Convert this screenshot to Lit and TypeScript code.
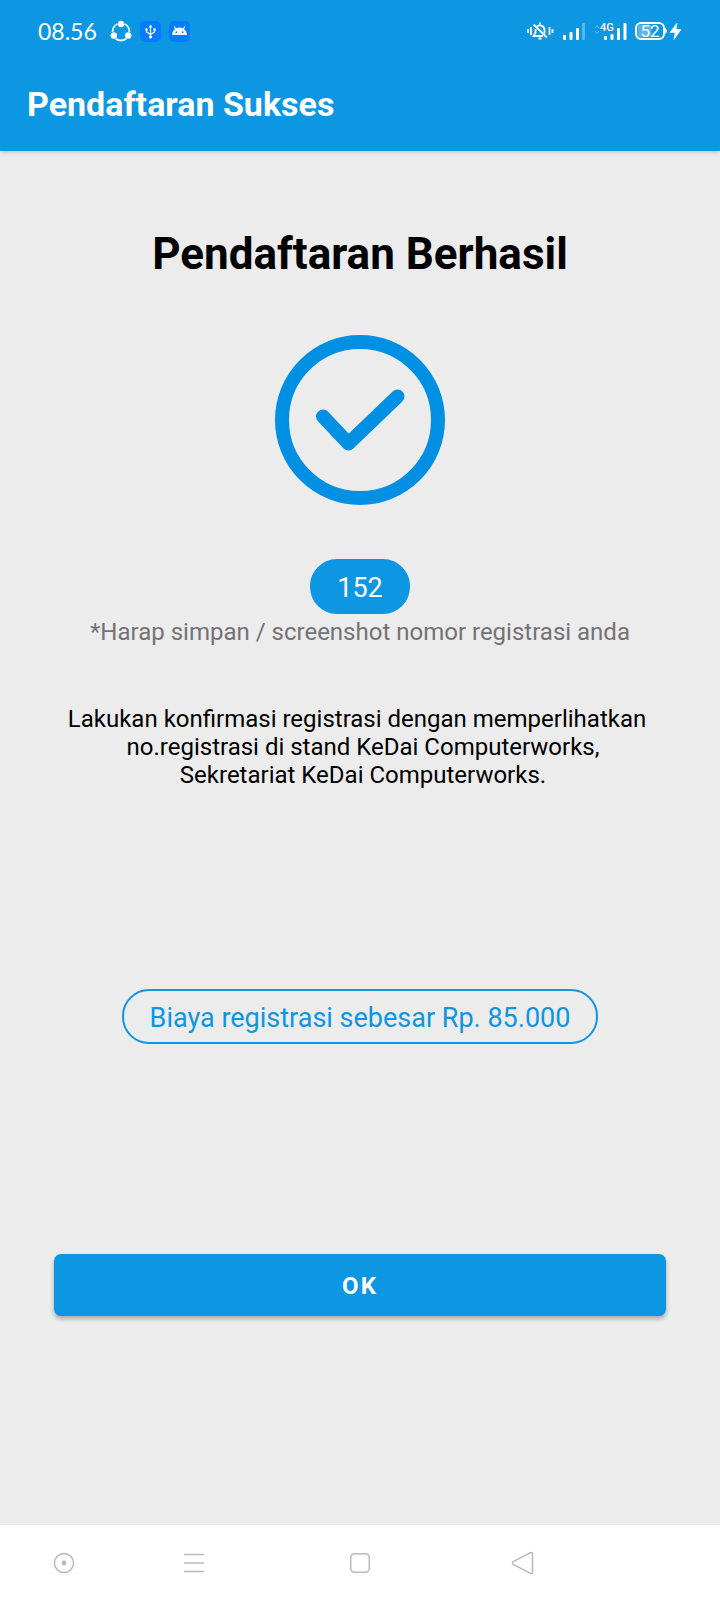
import { LitElement, html, css } from "lit";
import { customElement, property } from "lit/decorators.js";

@customElement("status-bar")
class StatusBar extends LitElement {
  @property() time = "08.56";
  @property() battery = "52";

  static styles = css`
    :host {
      display: flex;
      align-items: center;
      justify-content: space-between;
      height: 62px;
      padding: 0 38px;
      color: #fff;
      font-family: Lato, Roboto, sans-serif;
    }
    .group {
      display: flex;
      align-items: center;
    }
    .time {
      font-size: 23px;
      line-height: 28px;
      margin-right: 13px;
    }
    .apps {
      gap: 8px;
    }
    .system {
      gap: 8px;
    }
    svg {
      display: block;
    }
    .net {
      font: 500 11px Roboto, sans-serif;
    }
    .level {
      font: 400 17px Roboto, sans-serif;
    }
  `;

  render() {
    return html`
      <div class="group">
        <span class="time">${this.time}</span>
        <div class="group apps">
          <svg width="22" height="22" viewBox="0 0 22 22" fill="none" stroke="#e4f8ff" stroke-width="1.800">
            <path d="M7.500 4A8.500 8.500 0 0 0 2.600 12" />
            <path d="M14.500 4A8.500 8.500 0 0 1 19.400 12" />
            <path d="M5.500 18.500A8.500 8.500 0 0 0 16.500 18.500" />
            <g fill="#fff" stroke="none">
              <circle cx="11" cy="4" r="3.200" />
              <circle cx="3.800" cy="15.500" r="3.200" />
              <circle cx="18.200" cy="15.500" r="3.200" />
            </g>
          </svg>
          <svg width="21" height="21" viewBox="0 0 21 21">
            <rect width="21" height="21" rx="5" fill="#047cff" />
            <g fill="none" stroke="#fff" stroke-width="1.300">
              <path d="M10.500 5v11M6.500 8.500v2.500l4 2.500M14.500 8.500v2.500l-4 2.500" />
            </g>
            <path d="M8.500 6.500l2-3 2 3z" fill="#fff" />
            <circle cx="10.500" cy="16" r="1.600" fill="#fff" />
            <circle cx="6.500" cy="8.500" r="1.200" fill="#fff" />
            <path d="M13.400 7.300h2.200v2.200h-2.200z" fill="#fff" />
          </svg>
          <svg width="21" height="21" viewBox="0 0 21 21">
            <rect width="21" height="21" rx="5" fill="#047cff" />
            <path d="M3 14a7.500 7.500 0 0 1 15 0z" fill="#fff" />
            <path d="M7 8.500L5.200 5.500M14 8.500l1.800-3" stroke="#fff" stroke-width="1.200" />
            <circle cx="7.300" cy="11.200" r="0.900" fill="#047cff" />
            <circle cx="13.700" cy="11.200" r="0.900" fill="#047cff" />
          </svg>
        </div>
      </div>
      <div class="group system">
        <svg width="28" height="20" viewBox="0 0 28 20" fill="none" stroke="#fff" stroke-width="1.800">
          <path d="M1 8v4M4 6v8M22.500 6v8M25.500 8v4" />
          <path d="M10 5.500A4.600 4.600 0 0 1 17.500 9v3.500M8.500 8v3.500L6.500 15H16" />
          <path d="M13 1.500v2M11.500 17.500h3M6.500 3.500L20 16.500" />
        </svg>
        <svg width="23" height="20" viewBox="0 0 23 20" fill="#fff">
          <rect x="0" y="14" width="3" height="5" rx="1" />
          <rect x="6.500" y="11" width="3" height="8" rx="1" />
          <rect x="13" y="7" width="3" height="12" rx="1" />
          <rect x="19" y="2" width="3" height="17" rx="1" opacity="0.300" />
        </svg>
        <svg width="33" height="20" viewBox="0 0 33 20" fill="#fff">
          <path d="M1 7l2-2.500L5 7M1 10l2 2.500L5 10" fill="none" stroke="#fff" opacity="0.350" />
          <text class="net" x="6" y="10">4G</text>
          <rect x="10" y="15" width="3" height="4" rx="1" />
          <rect x="16.500" y="13" width="3" height="6" rx="1" />
          <rect x="23" y="7" width="3" height="12" rx="1" />
          <rect x="29.500" y="2" width="3" height="17" rx="1" />
        </svg>
        <svg width="47" height="20" viewBox="0 0 47 20">
          <rect x="2.500" y="3.500" width="14" height="13" rx="3" fill="#fff" opacity="0.300" />
          <rect x="1" y="2" width="28" height="16" rx="5" fill="none" stroke="#fff" stroke-width="2" />
          <path d="M30.500 7.500q2 2.500 0 5z" fill="#fff" stroke="#fff" />
          <text class="level" x="15" y="16" text-anchor="middle" fill="#fff">${this.battery}</text>
          <path d="M42 2L35 11.500h5L39 18.500l7-10h-5z" fill="#fff" stroke="#fff" stroke-width="0.600" />
        </svg>
      </div>
    `;
  }
}

@customElement("nav-bar")
class NavBar extends LitElement {
  static styles = css`
    :host {
      display: grid;
      grid-template-columns: 127fr 134fr 198fr 126fr 135fr;
      height: 75px;
      background: #fff;
    }
    button {
      display: flex;
      align-items: center;
      justify-content: center;
      border: 0;
      padding: 0;
      background: none;
    }
    svg {
      fill: none;
      stroke: #b9b9b9;
      stroke-width: 1.5;
    }
  `;

  render() {
    return html`
      <button aria-label="Asisten">
        <svg width="24" height="24" viewBox="0 0 24 24">
          <circle cx="12" cy="12" r="9.600" />
          <circle cx="12" cy="12" r="2.400" fill="#b9b9b9" stroke="none" />
        </svg>
      </button>
      <button aria-label="Menu">
        <svg width="24" height="24" viewBox="0 0 24 24">
          <path d="M2 3.500h20M2 12h20M2 20.500h20" />
        </svg>
      </button>
      <button aria-label="Beranda">
        <svg width="24" height="24" viewBox="0 0 24 24">
          <rect x="2.700" y="2.700" width="18.600" height="18.600" rx="4" />
        </svg>
      </button>
      <button aria-label="Kembali">
        <svg width="24" height="24" viewBox="0 0 24 24">
          <path d="M3.200 10.700L20.500 1.600q2-.6 2 1.400V21q0 2-2 1.400L3.200 13.300q-1.600-1.300 0-2.600z" />
        </svg>
      </button>
    `;
  }
}

@customElement("app-root")
class AppRoot extends LitElement {
  @property() number = "152";
  @property() fee = "85.000";

  static styles = css`
    :host {
      display: flex;
      flex-direction: column;
      min-height: 100vh;
      background: #ececec;
      color: #000;
      font-family: Roboto, "Liberation Sans", sans-serif;
    }
    header {
      background: #0d96e2;
      box-shadow: 0 1px 5px rgba(0, 0, 0, 0.18);
    }
    .bar-title {
      margin: 0;
      padding: 22px 27px 27px;
      color: #fff;
      font-size: 34px;
      line-height: 40px;
      font-weight: 700;
    }
    main {
      flex: 1;
      display: flex;
      flex-direction: column;
      align-items: center;
      padding: 76px 54px 0;
      text-align: center;
    }
    h2 {
      margin: 0 0 54px;
      font-size: 44px;
      line-height: 54px;
      font-weight: 700;
    }
    .check {
      display: block;
      margin-bottom: 54px;
    }
    .chip {
      box-sizing: border-box;
      height: 55px;
      padding: 0 25px;
      border: 2px solid #0d96e2;
      border-radius: 27px;
      color: #0d96e2;
      font-size: 27px;
      line-height: 54px;
    }
    .filled {
      background: #0d96e2;
      color: #fff;
    }
    p {
      margin: 0;
      font-size: 24px;
      line-height: 28px;
    }
    .hint {
      margin: 4px 0 59px;
      color: #737373;
    }
    .fee {
      margin: 200px 0 210px;
      padding: 0 26px;
    }
    .ok {
      align-self: stretch;
      height: 62px;
      padding: 2px 0 0;
      border: 0;
      border-radius: 7px;
      background: #0d96e2;
      box-shadow: 0 3px 4px rgba(0, 0, 0, 0.28);
      color: #fff;
      font: 700 24px Roboto, "Liberation Sans", sans-serif;
      letter-spacing: 2px;
    }
  `;

  render() {
    return html`
      <header>
        <status-bar></status-bar>
        <h1 class="bar-title">Pendaftaran Sukses</h1>
      </header>
      <main>
        <h2>Pendaftaran Berhasil</h2>
        <svg class="check" width="170" height="170" viewBox="0 0 170 170" fill="none" stroke="#0090e3">
          <circle cx="85" cy="85" r="78" stroke-width="14" />
          <path d="M48 81.500L73.500 108.500L122.500 61.500" stroke-width="14" stroke-linecap="round" stroke-linejoin="round" />
        </svg>
        <div class="chip filled">${this.number}</div>
        <p class="hint">*Harap simpan / screenshot nomor registrasi anda</p>
        <p>
          Lakukan konfirmasi registrasi dengan memperlihatkan&nbsp;<br />
          &nbsp;no.registrasi di stand KeDai Computerworks,<br />
          &nbsp;Sekretariat KeDai Computerworks.
        </p>
        <div class="chip fee">Biaya registrasi sebesar Rp. ${this.fee}</div>
        <button class="ok">OK</button>
      </main>
      <nav-bar></nav-bar>
    `;
  }
}
